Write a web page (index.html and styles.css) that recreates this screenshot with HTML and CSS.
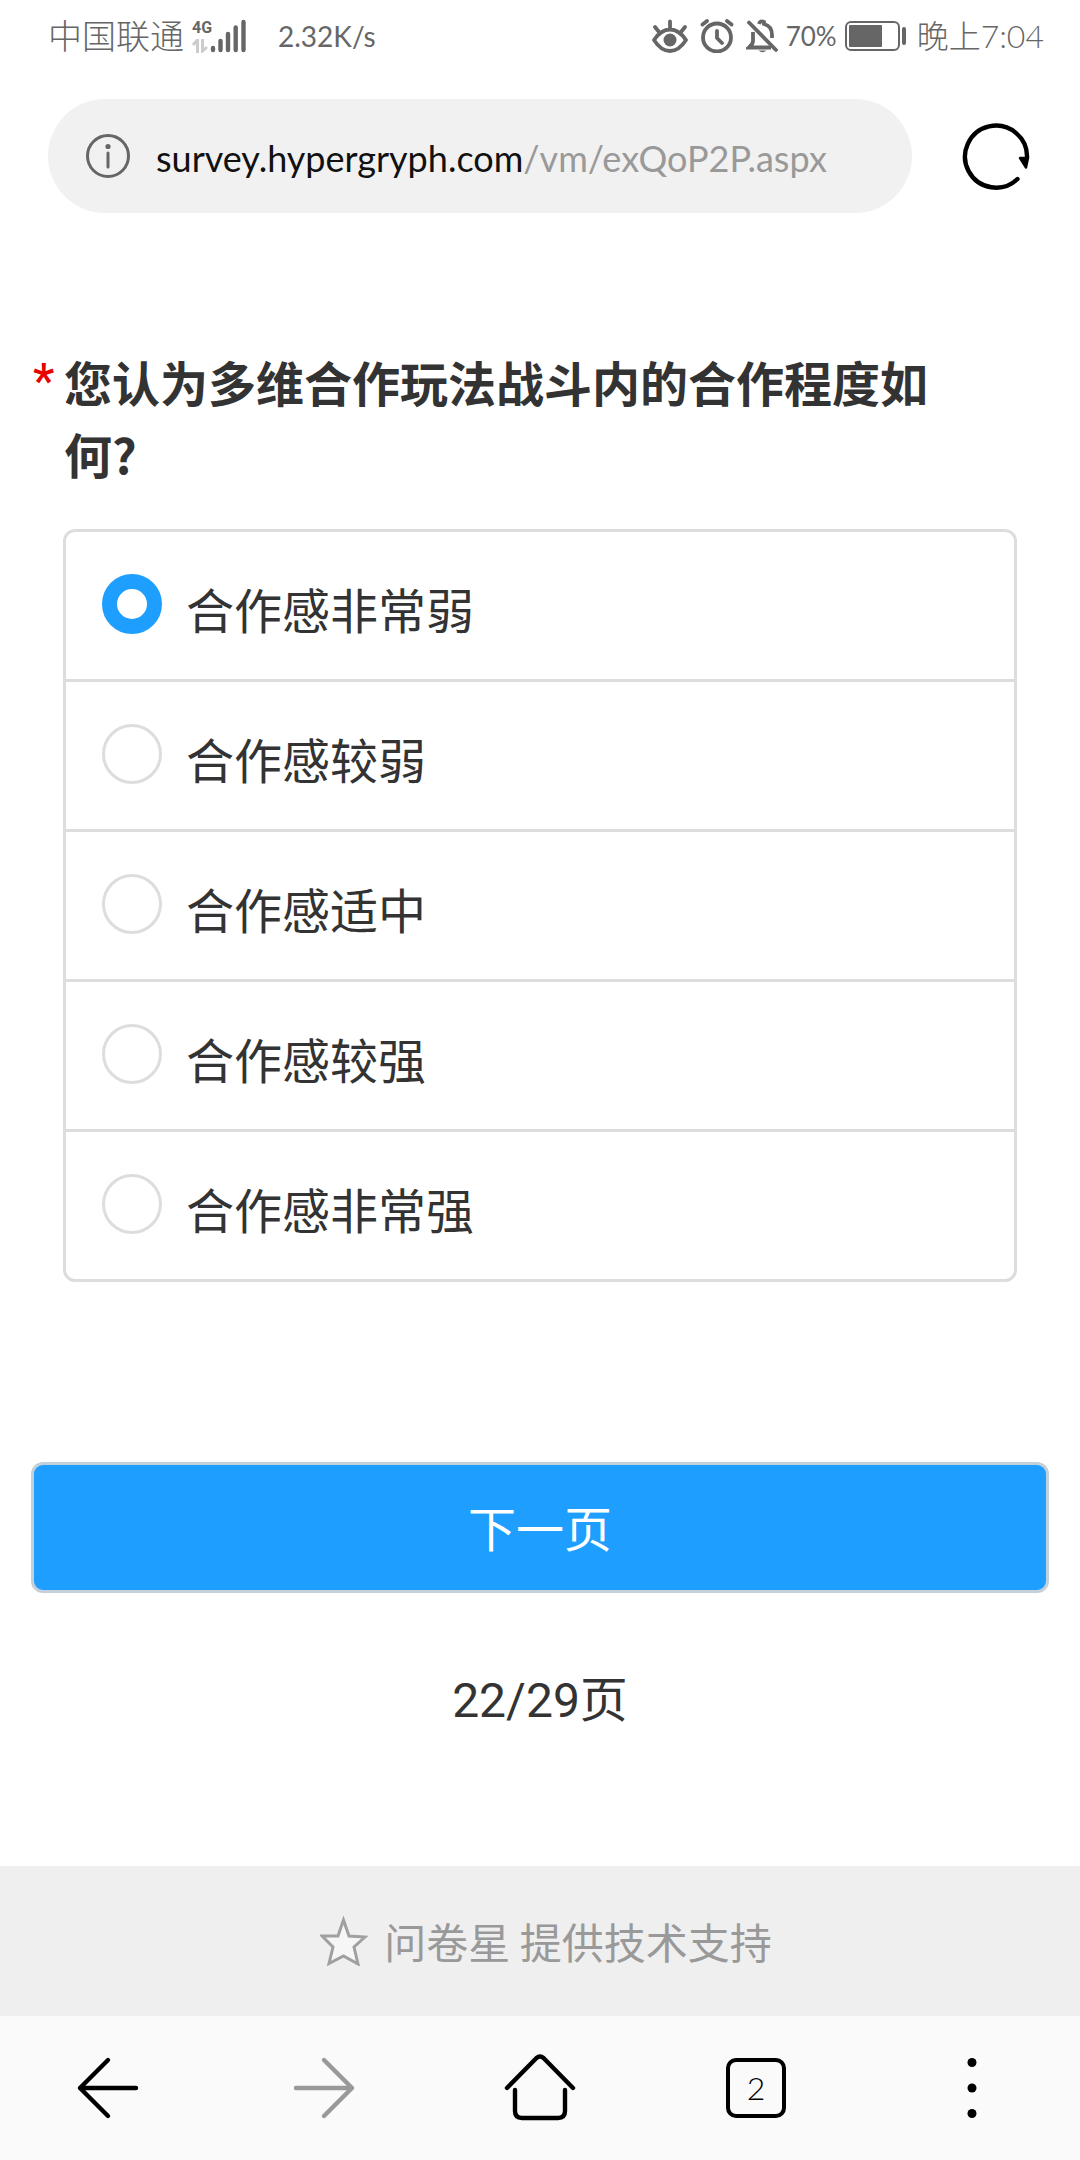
FILE: index.html
```html
<!DOCTYPE html>
<html lang="zh-CN">
<head>
<meta charset="utf-8">
<meta name="viewport" content="width=device-width, initial-scale=1">
<title>问卷调查</title>
<link rel="stylesheet" href="styles.css">
</head>
<body>
<header class="status">
  <span class="carrier">中国联通</span>
  <div class="network">
    <span class="network-type">4G</span>
    <svg width="16" height="14" viewBox="0 0 16 14" fill="none" stroke="#ccc" stroke-width="3" aria-hidden="true">
      <path d="M5.500 14V1L1 6M10.500 0V12L15 8"/>
    </svg>
  </div>
  <svg class="signal" width="36" height="34" viewBox="0 0 36 34" stroke="#666" stroke-width="4.400" stroke-linecap="round" aria-hidden="true">
    <path d="M3 29v2M10.500 22v9M18 15v16M25.700 8.500V31M33.500 3v28"/>
  </svg>
  <span class="speed">2.32K/s</span>
  <div class="status-right">
    <svg width="36" height="34" viewBox="0 0 36 34" fill="none" stroke="#666" stroke-width="3.800" stroke-linecap="round" stroke-linejoin="round" aria-hidden="true">
      <path d="M18 2.500V10M3 8l4 5M33 8l-4 5M2 21Q9 10.500 18 10.500T34 21Q27 32 18 32T2 21Z"/>
      <circle cx="18" cy="21" r="6.500" fill="#666" stroke="none"/>
    </svg>
    <svg width="34" height="34" viewBox="0 0 34 34" fill="none" stroke="#666" stroke-width="3.800" stroke-linecap="round" stroke-linejoin="round" aria-hidden="true">
      <circle cx="17" cy="18.500" r="14"/>
      <path d="M17 12v7l5 5M2.500 5.500L7 2M27 2l4.500 3.500"/>
    </svg>
    <svg width="32" height="34" viewBox="0 0 32 34" fill="none" stroke="#666" stroke-width="3.800" stroke-linecap="round" aria-hidden="true">
      <path d="M3 3.500L30 31"/>
      <path d="M13 5q1-4 5 -2v2q8 2 8 11v3M7 13v9q0 3-4 6.500h22" stroke-linecap="butt"/>
      <path d="M12.500 31.500h8q-4 3.500-8 0Z" fill="#666" stroke="none"/>
    </svg>
    <span class="percent">70%</span>
    <svg class="battery" width="62" height="32" viewBox="0 0 62 32" aria-hidden="true">
      <rect x="1" y="2" width="53" height="28" rx="5" fill="none" stroke="#666" stroke-width="2"/>
      <rect x="4" y="5" width="33" height="22" rx="1" fill="#666"/>
      <rect x="57" y="7" width="4" height="18" rx="2" fill="#666"/>
    </svg>
    <span class="clock">晚上7:04</span>
  </div>
</header>

<div class="toolbar">
  <div class="address">
    <button class="icon-button" type="button" aria-label="网站信息">
      <svg width="44" height="44" viewBox="0 0 44 44" fill="none" stroke="#666" stroke-width="3" stroke-linecap="round" aria-hidden="true">
        <circle cx="22" cy="22" r="20.500"/>
        <path d="M22 19v14"/>
        <circle cx="22" cy="12.500" r="2.600" fill="#666" stroke="none"/>
      </svg>
    </button>
    <a class="url" href="#">survey.hypergryph.com<span class="url-path">/vm/exQoP2P.aspx</span></a>
  </div>
  <button class="icon-button reload" type="button" aria-label="刷新">
    <svg width="68" height="68" viewBox="0 0 68 68" fill="none" stroke="#000" stroke-width="4.400" stroke-linecap="round" aria-hidden="true">
      <path d="M55.500 57A31 31 0 1 1 65 36"/>
      <path d="M58 36L66 36L64 45.500Z" fill="#000" stroke-width="2.400" stroke-linejoin="round"/>
    </svg>
  </button>
</div>

<main class="survey">
  <form class="form">
    <fieldset class="question">
      <legend class="legend">
        <span class="title"><span class="required">*</span><span class="title-text">您认为多维合作玩法战斗内的合作程度如何?</span></span>
      </legend>
      <div class="options">
        <label class="option"><input class="radio" type="radio" name="coop" checked><span class="option-text">合作感非常弱</span></label>
        <label class="option"><input class="radio" type="radio" name="coop"><span class="option-text">合作感较弱</span></label>
        <label class="option"><input class="radio" type="radio" name="coop"><span class="option-text">合作感适中</span></label>
        <label class="option"><input class="radio" type="radio" name="coop"><span class="option-text">合作感较强</span></label>
        <label class="option"><input class="radio" type="radio" name="coop"><span class="option-text">合作感非常强</span></label>
      </div>
    </fieldset>
    <button class="next" type="button">下一页</button>
    <p class="pager">22/29页</p>
  </form>
</main>

<footer class="credit">
  <svg width="48" height="50" viewBox="0 0 48 50" fill="#f6f6f6" stroke="#a0a0a0" stroke-width="3" aria-hidden="true">
    <path d="M23.500 4L29 20L45 21L34 31L38 48L23.500 40L9 47.500L13 31L2 20L18 20Z"/>
  </svg>
  <a class="credit-link" href="#">问卷星 提供技术支持</a>
</footer>

<nav class="browser-nav">
  <button class="icon-button" type="button" aria-label="后退">
    <svg width="72" height="72" viewBox="0 0 72 72" fill="none" stroke="#000" stroke-width="4.400" stroke-linecap="round" stroke-linejoin="round" aria-hidden="true"><path d="M36 8L8 36L36 64M8 36H64"/></svg>
  </button>
  <button class="icon-button" type="button" aria-label="前进">
    <svg width="72" height="72" viewBox="0 0 72 72" fill="none" stroke="#999" stroke-width="4.400" stroke-linecap="round" stroke-linejoin="round" aria-hidden="true"><path d="M36 8L64 36L36 64M64 36H8"/></svg>
  </button>
  <button class="icon-button" type="button" aria-label="主页">
    <svg width="72" height="72" viewBox="0 0 72 72" fill="none" stroke="#000" stroke-width="4.400" stroke-linecap="round" stroke-linejoin="round" aria-hidden="true"><path d="M3 36L32.500 6Q36 3 39.500 6L69 36M11 38V59Q11 66 18 66H54Q61 66 61 59V38"/></svg>
  </button>
  <button class="icon-button" type="button" aria-label="标签页"><span class="tabs">2</span></button>
  <button class="icon-button" type="button" aria-label="菜单">
    <svg width="72" height="72" viewBox="0 0 72 72" aria-hidden="true"><circle cx="36" cy="10.500" r="4.500"/><circle cx="36" cy="36" r="4.500"/><circle cx="36" cy="61.500" r="4.500"/></svg>
  </button>
</nav>
</body>
</html>
```
FILE: styles.css
```css
* {
  box-sizing: border-box;
}

body {
  display: flex;
  flex-direction: column;
  min-height: 100vh;
  margin: 0;
  background: #fff;
  color: #333;
  font-family: Roboto, "Noto Sans CJK SC", sans-serif;
  font-size: 48px;
  line-height: 72px;
}

svg {
  display: block;
  flex: none;
}

button {
  padding: 0;
  border: 0;
  background: none;
  color: inherit;
  font: inherit;
}

a {
  color: inherit;
  text-decoration: none;
}

.icon-button {
  display: flex;
  align-items: center;
  justify-content: center;
}

/* Phone status bar */

.status {
  display: flex;
  align-items: center;
  height: 72px;
  padding: 0 36px 0 48px;
  color: #666;
  font-family: Lato, "Noto Sans CJK SC", sans-serif;
  font-size: 28px;
  line-height: 36px;
  white-space: nowrap;
}

.carrier {
  font-size: 34px;
  font-weight: 300;
}

.network {
  display: flex;
  flex-direction: column;
  gap: 2px;
  width: 18px;
  margin-left: 8px;
}

.network-type {
  font-family: Roboto, sans-serif;
  font-size: 16px;
  font-weight: 700;
  line-height: 18px;
}

.speed {
  margin-left: 32px;
}

.status-right {
  display: flex;
  align-items: center;
  gap: 12px;
  margin-left: auto;
}

.percent {
  margin: 0 -4px;
  font-size: 26px;
}

.battery {
  margin-right: -2px;
}

.clock {
  font-size: 32px;
  font-weight: 300;
}

/* Address bar */

.toolbar {
  display: flex;
  align-items: center;
  padding: 27px 0 0 48px;
}

.address {
  display: flex;
  flex: 1;
  align-items: center;
  gap: 26px;
  min-width: 0;
  height: 114px;
  padding: 0 38px;
  border-radius: 57px;
  background: #f1f1f1;
}

.url {
  overflow: hidden;
  padding-top: 4px;
  color: #111;
  font-family: Lato, sans-serif;
  font-size: 36px;
  white-space: nowrap;
}

.url-path {
  color: #999;
}

.reload {
  width: 168px;
}

/* Survey page */

.survey {
  flex: 1;
  padding: 132px 31px 129px;
}

.question {
  min-width: 0;
  margin: 0;
  padding: 0 32px 0 0;
  border: 0;
}

.legend {
  width: 100%;
  padding: 0;
}

.title {
  display: flex;
  padding-right: 48px;
  font-family: "Noto Sans CJK SC", sans-serif;
  font-weight: 700;
}

.required {
  flex: none;
  width: 33px;
  padding-left: 2px;
  color: #e60000;
  font-family: Roboto, sans-serif;
  font-weight: 500;
}

.options {
  margin: 40px 0 0 32px;
  border: 3px solid #ddd;
  border-radius: 12px;
}

.option {
  display: flex;
  align-items: center;
  gap: 24px;
  height: 147px;
  padding: 0 36px 4px;
}

.option + .option {
  height: 150px;
  border-top: 3px solid #ddd;
}

.radio {
  flex: none;
  width: 60px;
  height: 60px;
  margin: 0;
  border: 3px solid #ddd;
  border-radius: 50%;
  background: #fff;
  appearance: none;
}

.radio:checked {
  border: 15px solid #1e9fff;
}

.option-text {
  padding-top: 18px;
}

.next {
  display: block;
  width: 100%;
  height: 131px;
  margin-top: 180px;
  padding-top: 6px;
  border: 3px solid #c3cfd9;
  border-radius: 12px;
  background: #1e9fff;
  color: #fff;
}

.pager {
  margin: 72px 0 0;
  text-align: center;
}

/* Provider credit */

.credit {
  display: flex;
  align-items: center;
  justify-content: center;
  gap: 16px;
  height: 150px;
  padding-left: 12px;
  background: #efefef;
  color: #999;
  font-family: "Noto Sans CJK SC", sans-serif;
  font-size: 42px;
}

/* Browser navigation */

.browser-nav {
  display: grid;
  grid-template-columns: repeat(5, 1fr);
  height: 144px;
  background: #fafafa;
  color: #000;
}

.tabs {
  width: 60px;
  height: 60px;
  border: 4px solid #000;
  border-radius: 10px;
  font-family: Lato, sans-serif;
  font-size: 32px;
  font-weight: 300;
  line-height: 52px;
}
```
